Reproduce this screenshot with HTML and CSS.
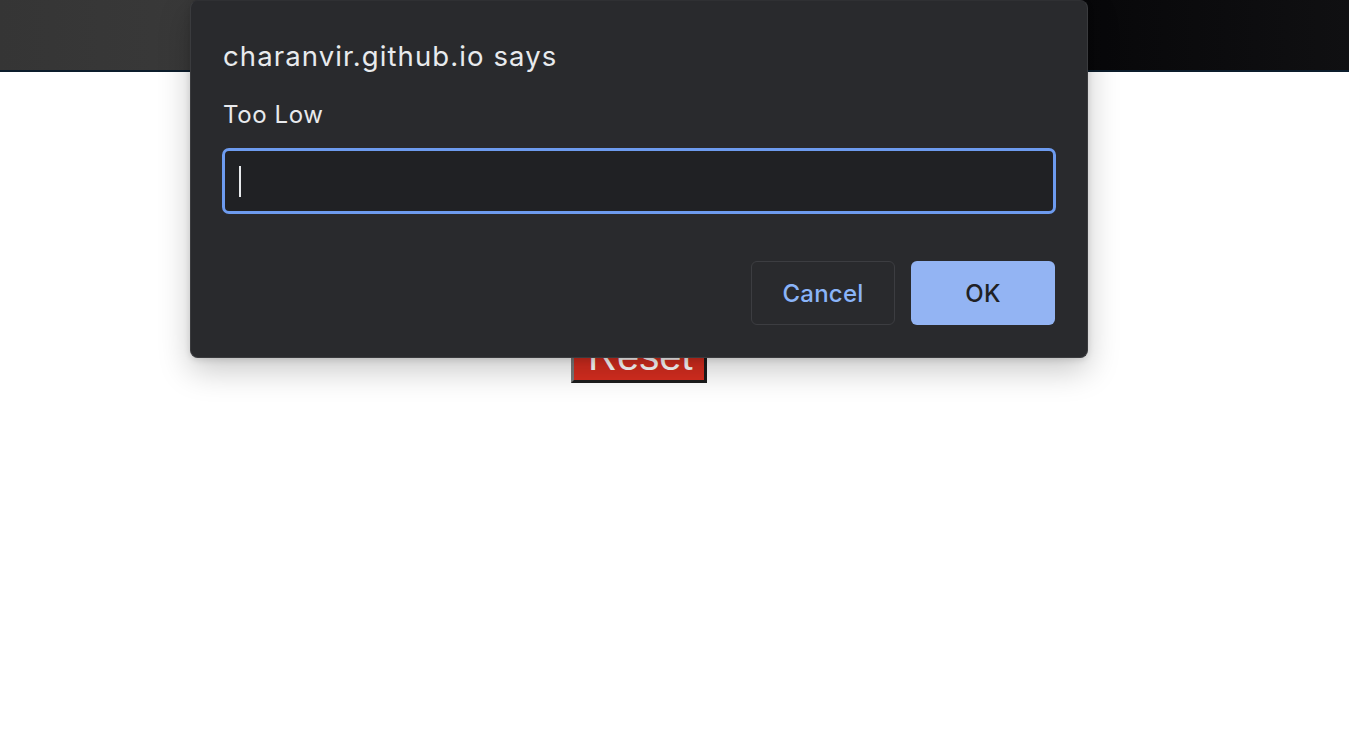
FILE: index.html
```html
<!DOCTYPE html>
<html lang="en">
<head>
<meta charset="utf-8">
<title>Guess</title>
<link rel="stylesheet" href="styles.css">
</head>
<body>
<div class="page">
  <header class="topbar"></header>
  <main class="content">
    <button class="reset">Reset</button>
  </main>
</div>
<div class="dialog">
  <div class="dialog-title">charanvir.github.io says</div>
  <div class="dialog-message">Too Low</div>
  <div class="dialog-input"><span class="caret"></span></div>
  <div class="dialog-actions">
    <button class="btn btn-cancel">Cancel</button>
    <button class="btn btn-ok">OK</button>
  </div>
</div>
</body>
</html>
```
FILE: styles.css
```css
html, body {
  margin: 0;
  padding: 0;
  background: #ffffff;
  font-family: Inter, "Noto Sans", "Liberation Sans", sans-serif;
}
.page {
  display: flex;
  flex-direction: column;
  min-height: 738px;
}
.topbar {
  height: 70px;
  background: linear-gradient(90deg, #353535 0%, #3d3d3d 30%, #1c1c1e 55%, #050507 75%, #101012 100%);
  border-bottom: 2px solid #0c1d2c;
}
.content {
  display: flex;
  flex-direction: column;
  align-items: center;
  padding-top: 256px;
}
.reset {
  font-family: "Liberation Sans", Arial, sans-serif;
  font-size: 40px;
  line-height: 46px;
  color: #ffffff;
  background: #d62d1f;
  border-style: solid;
  border-width: 2px 3px 3px 3px;
  border-color: #8a8a8a #1c1c1c #1c1c1c #7a7a7a;
  padding: 2px 13px 0 14px;
  width: 136px;
  height: 55px;
  margin-right: 71px;
}
.dialog {
  position: absolute;
  left: 190px;
  top: 0;
  height: 356px;
  box-sizing: content-box;
  background: #292a2d;
  border: 1px solid #3a3b3e;
  border-top-color: #2f3033;
  border-radius: 8px;
  box-shadow: 0 12px 32px rgba(0, 0, 0, 0.22), 0 2px 6px rgba(0, 0, 0, 0.12);
  padding: 0 32px 0 32px;
  width: 832px;
  display: flex;
  flex-direction: column;
  color: #e8eaed;
}
.dialog-title {
  margin-top: 39px;
  font-size: 27.5px;
  line-height: 32px;
  letter-spacing: 1.1px;
}
.dialog-message {
  margin-top: 28px;
  font-size: 24px;
  line-height: 30px;
  letter-spacing: 0.6px;
}
.dialog-input {
  margin: 18px -1px 0 -1px;
  height: 60px;
  border: 3px solid #6d9bef;
  border-radius: 7px;
  background: #202124;
  display: flex;
  align-items: center;
  padding-left: 14px;
}
.caret {
  display: block;
  width: 2px;
  height: 31px;
  background: #e8eaed;
}
.dialog-actions {
  margin-top: 47px;
  display: flex;
  justify-content: flex-end;
  gap: 16px;
}
.btn {
  width: 144px;
  height: 64px;
  border-radius: 6px;
  font-family: Inter, "Noto Sans", sans-serif;
  font-size: 24px;
  font-weight: 500;
  letter-spacing: 0.2px;
  cursor: pointer;
}
.btn-cancel {
  background: transparent;
  border: 1px solid #3c3d41;
  color: #8ab4f8;
}
.btn-ok {
  background: #93b4f3;
  border: none;
  color: #202124;
}
```
